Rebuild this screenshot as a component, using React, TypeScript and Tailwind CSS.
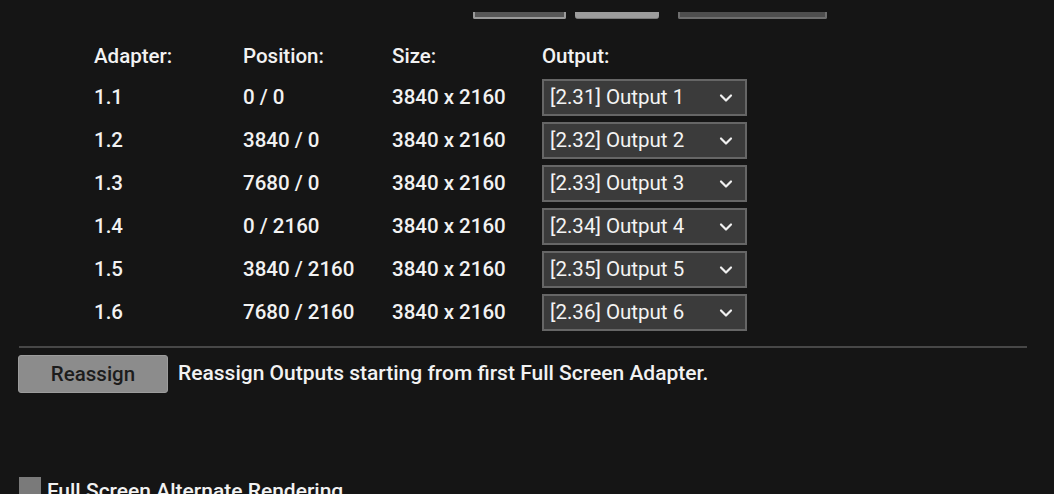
import * as React from 'react';

const rows = [
  { adapter: '1.1', position: '0 / 0', size: '3840 x 2160', output: '[2.31] Output 1' },
  { adapter: '1.2', position: '3840 / 0', size: '3840 x 2160', output: '[2.32] Output 2' },
  { adapter: '1.3', position: '7680 / 0', size: '3840 x 2160', output: '[2.33] Output 3' },
  { adapter: '1.4', position: '0 / 2160', size: '3840 x 2160', output: '[2.34] Output 4' },
  { adapter: '1.5', position: '3840 / 2160', size: '3840 x 2160', output: '[2.35] Output 5' },
  { adapter: '1.6', position: '7680 / 2160', size: '3840 x 2160', output: '[2.36] Output 6' },
];

function Chevron() {
  return (
    <svg width="14" height="10" viewBox="0 0 14 10" className="shrink-0">
      <polyline points="2,2.5 7,7.5 12,2.5" fill="none" stroke="#f0f0f0" strokeWidth="2.2" strokeLinecap="round" strokeLinejoin="round" />
    </svg>
  );
}

function OutputSelect(props: { value: string }) {
  return (
    <div className="w-[205px] h-[37px] flex items-center justify-between pl-[6px] pr-[12px] bg-[#3b3b3b] border-2 border-[#666666] text-[20.5px] font-normal text-[#f4f4f4]">
      <span>{props.value}</span>
      <Chevron />
    </div>
  );
}

export default function App() {
  return (
    <div className="w-[1054px] h-[494px] overflow-hidden bg-[#151515] text-[#f2f2f2]" style={{ fontFamily: 'Roboto, "Liberation Sans", sans-serif' }}>
      {/* cut-off buttons on top */}
      <div className="flex items-end h-[20px] pl-[473px]">
        <div className="w-[93px] h-[7px] mb-[1px] bg-[#575757] border-x-2 border-b-2 border-[#9a9a9a] rounded-b-[2px]"></div>
        <div className="w-[84px] h-[7px] mb-[1px] ml-[9px] bg-[#9c9c9c] border-b border-[#7a7a7a] rounded-b-[3px]"></div>
        <div className="w-[149px] h-[7px] mb-[1px] ml-[19px] bg-[#4e4e4e] border-x-2 border-b-2 border-[#6e6e6e] rounded-b-[2px]"></div>
      </div>

      <div className="pl-[94px] pt-[18px]">
        <div className="grid grid-cols-[149px_149px_150px_205px] items-center font-medium text-[20.5px]">
          <div className="h-[36px] flex items-center">Adapter:</div>
          <div className="h-[36px] flex items-center">Position:</div>
          <div className="h-[36px] flex items-center">Size:</div>
          <div className="h-[36px] flex items-center">Output:</div>
        </div>
        <div className="mt-[5px] flex flex-col gap-[6px]">
          {rows.map((r) => (
            <div key={r.adapter} className="grid grid-cols-[149px_149px_150px_205px] items-center font-medium text-[20.5px]">
              <div>{r.adapter}</div>
              <div>{r.position}</div>
              <div>{r.size}</div>
              <OutputSelect value={r.output} />
            </div>
          ))}
        </div>
      </div>

      <div className="ml-[19px] w-[1008px] mt-[15px] h-[2px] bg-[#474747]"></div>

      <div className="flex items-center pl-[18px] mt-[7px] gap-[10px]">
        <button className="w-[150px] h-[38px] bg-[#8c8c8c] border border-[#9c9c9c] rounded-[3px] text-[20.5px] font-medium text-[#1c1c1c]">
          Reassign
        </button>
        <span className="text-[21px] font-medium">Reassign Outputs starting from first Full Screen Adapter.</span>
      </div>

      <div className="flex items-start pl-[19px] mt-[84px] gap-[6px]">
        <div className="w-[22px] h-[22px] bg-[#7a7a7a] shrink-0"></div>
        <span className="text-[21px] font-medium leading-none mt-[4px]">Full Screen Alternate Rendering</span>
      </div>
    </div>
  );
}
